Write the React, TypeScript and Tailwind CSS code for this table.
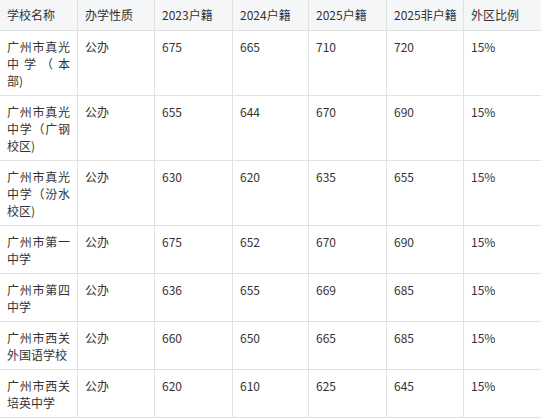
import React from "react";

const headers = ["学校名称", "办学性质", "2023户籍", "2024户籍", "2025户籍", "2025非户籍", "外区比例"];

const rows: { name: string; tall: boolean; vals: string[] }[] = [
  { name: "广州市真光中学（本部)", tall: true, vals: ["公办", "675", "665", "710", "720", "15%"] },
  { name: "广州市真光中学（广钢校区)", tall: true, vals: ["公办", "655", "644", "670", "690", "15%"] },
  { name: "广州市真光中学（汾水校区)", tall: true, vals: ["公办", "630", "620", "635", "655", "15%"] },
  { name: "广州市第一中学", tall: false, vals: ["公办", "675", "652", "670", "690", "15%"] },
  { name: "广州市第四中学", tall: false, vals: ["公办", "636", "655", "669", "685", "15%"] },
  { name: "广州市西关外国语学校", tall: false, vals: ["公办", "660", "650", "665", "685", "15%"] },
  { name: "广州市西关培英中学", tall: false, vals: ["公办", "620", "610", "625", "645", "15%"] },
];

export default function App() {
  return (
    <div
      className="w-[541px] h-[419px] bg-white text-[#333333] text-[12px] leading-[17px] overflow-hidden"
      style={{ fontFamily: '"Noto Sans CJK SC", "Noto Sans", sans-serif' }}
    >
      <div className="grid grid-cols-[78px_77px_78px_76px_78px_77px_77px]">
        {headers.map((h, i) => (
          <div
            key={h}
            className={`bg-[#f5f6f7] border-b border-[#e1e1e1] pl-[7px] pr-[7px] pt-[6px] pb-[7px] h-[31px] whitespace-nowrap ${
              i < 6 ? "border-r" : ""
            }`}
          >
            {h}
          </div>
        ))}
        {rows.map((r) => (
          <React.Fragment key={r.name}>
            <div
              className={`border-b border-r border-[#e1e1e1] pl-[7px] pr-[7px] pt-[7px] pb-[6px] text-justify ${
                r.tall ? "h-[65px]" : "h-[48px]"
              }`}
            >
              {r.name}
            </div>
            {r.vals.map((v, j) => (
              <div
                key={j}
                className={`border-b border-[#e1e1e1] pl-[7px] pr-[7px] pt-[7px] pb-[6px] ${
                  j < 5 ? "border-r" : ""
                } ${r.tall ? "h-[65px]" : "h-[48px]"}`}
              >
                {v}
              </div>
            ))}
          </React.Fragment>
        ))}
      </div>
    </div>
  );
}
